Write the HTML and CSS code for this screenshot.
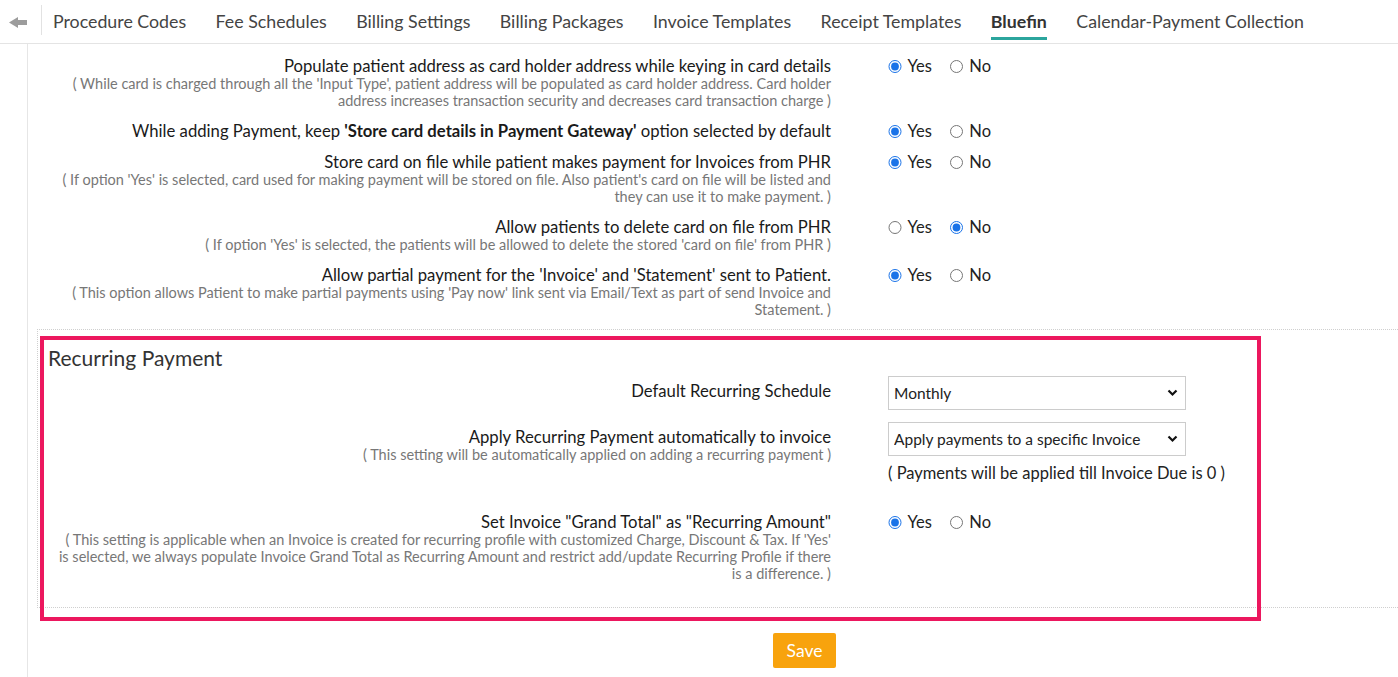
FILE: index.html
```html
<!DOCTYPE html>
<html lang="en">
<head>
<meta charset="utf-8">
<title>Bluefin Settings</title>
<link rel="stylesheet" href="styles.css">
</head>
<body>
<header class="topbar">
  <button class="back" type="button" aria-label="Back">
    <svg width="18" height="11" viewBox="0 0 18 11"><polygon points="0,5.5 9,0 9,11" fill="#9c9c9c"/><rect x="8" y="3" width="10" height="5" fill="#9c9c9c"/></svg>
  </button>
  <span class="divider"></span>
  <nav class="tabs">
    <a class="tab" href="#">Procedure Codes</a>
    <a class="tab" href="#">Fee Schedules</a>
    <a class="tab" href="#">Billing Settings</a>
    <a class="tab" href="#">Billing Packages</a>
    <a class="tab" href="#">Invoice Templates</a>
    <a class="tab" href="#">Receipt Templates</a>
    <a class="tab active" href="#">Bluefin</a>
    <a class="tab" href="#">Calendar-Payment Collection</a>
  </nav>
</header>

<main class="main">
  <div class="settings">
    <div class="row">
      <div class="label">
        <div class="title">Populate patient address as card holder address while keying in card details</div>
        <div class="desc">( While card is charged through all the 'Input Type', patient address will be populated as card holder address. Card holder address increases transaction security and decreases card transaction charge )</div>
      </div>
      <div class="options">
        <label class="opt"><input type="radio" name="r1" checked>Yes</label>
        <label class="opt"><input type="radio" name="r1">No</label>
      </div>
    </div>
    <div class="row">
      <div class="label">
        <div class="title">While adding Payment, keep <b>'Store card details in Payment Gateway'</b> option selected by default</div>
      </div>
      <div class="options">
        <label class="opt"><input type="radio" name="r2" checked>Yes</label>
        <label class="opt"><input type="radio" name="r2">No</label>
      </div>
    </div>
    <div class="row">
      <div class="label">
        <div class="title">Store card on file while patient makes payment for Invoices from PHR</div>
        <div class="desc">( If option 'Yes' is selected, card used for making payment will be stored on file. Also patient's card on file will be listed and they can use it to make payment. )</div>
      </div>
      <div class="options">
        <label class="opt"><input type="radio" name="r3" checked>Yes</label>
        <label class="opt"><input type="radio" name="r3">No</label>
      </div>
    </div>
    <div class="row">
      <div class="label">
        <div class="title">Allow patients to delete card on file from PHR</div>
        <div class="desc">( If option 'Yes' is selected, the patients will be allowed to delete the stored 'card on file' from PHR )</div>
      </div>
      <div class="options">
        <label class="opt"><input type="radio" name="r4">Yes</label>
        <label class="opt"><input type="radio" name="r4" checked>No</label>
      </div>
    </div>
    <div class="row">
      <div class="label">
        <div class="title">Allow partial payment for the 'Invoice' and 'Statement' sent to Patient.</div>
        <div class="desc">( This option allows Patient to make partial payments using 'Pay now' link sent via Email/Text as part of send Invoice and Statement. )</div>
      </div>
      <div class="options">
        <label class="opt"><input type="radio" name="r5" checked>Yes</label>
        <label class="opt"><input type="radio" name="r5">No</label>
      </div>
    </div>
  </div>

  <section class="recurring">
    <h3 class="section-title">Recurring Payment</h3>
    <div class="row row-schedule">
      <div class="label pad">
        <div class="title">Default Recurring Schedule</div>
      </div>
      <div class="control">
        <div class="select">
          <select><option>Monthly</option></select>
          <svg width="11" height="8" viewBox="0 0 11 8"><polyline points="1.5,1.5 5.5,5.5 9.5,1.5" fill="none" stroke="#111" stroke-width="2.2"/></svg>
        </div>
      </div>
    </div>
    <div class="row row-apply">
      <div class="label pad">
        <div class="title">Apply Recurring Payment automatically to invoice</div>
        <div class="desc">( This setting will be automatically applied on adding a recurring payment )</div>
      </div>
      <div class="control">
        <div class="select">
          <select><option>Apply payments to a specific Invoice</option></select>
          <svg width="11" height="8" viewBox="0 0 11 8"><polyline points="1.5,1.5 5.5,5.5 9.5,1.5" fill="none" stroke="#111" stroke-width="2.2"/></svg>
        </div>
        <div class="help">( Payments will be applied till Invoice Due is 0 )</div>
      </div>
    </div>
    <div class="row">
      <div class="label">
        <div class="title">Set Invoice "Grand Total" as "Recurring Amount"</div>
        <div class="desc">( This setting is applicable when an Invoice is created for recurring profile with customized Charge, Discount &amp; Tax. If 'Yes' is selected, we always populate Invoice Grand Total as Recurring Amount and restrict add/update Recurring Profile if there is a difference. )</div>
      </div>
      <div class="options">
        <label class="opt"><input type="radio" name="r6" checked>Yes</label>
        <label class="opt"><input type="radio" name="r6">No</label>
      </div>
    </div>
  </section>

  <div class="actions">
    <button class="save" type="button">Save</button>
  </div>
</main>

<div class="highlight"></div>
</body>
</html>
```
FILE: styles.css
```css
* { box-sizing: border-box; }
html, body { margin: 0; padding: 0; }
body {
  font-family: Lato, "Open Sans", "Liberation Sans", sans-serif;
  font-size: 16px;
  color: #222;
  background: #fff;
  width: 1398px;
  height: 677px;
  overflow: hidden;
  position: relative;
}

/* top tab bar */
.topbar {
  display: flex;
  align-items: flex-start;
  height: 44px;
  border-bottom: 1px solid #e4e4e4;
}
.back {
  width: 41px;
  height: 43px;
  border: 0;
  background: none;
  padding: 1px 0 0 9px;
  display: flex;
  align-items: center;
  justify-content: flex-start;
}
.divider {
  width: 1px;
  height: 30px;
  margin-top: 5px;
  background: #e2e2e2;
}
.tabs {
  display: flex;
  gap: 29.4px;
  margin-left: 11px;
}
.tab {
  display: block;
  font-size: 17.8px;
  line-height: 20px;
  padding-top: 11px;
  padding-bottom: 6px;
  border-bottom: 3px solid transparent;
  color: #444;
  text-decoration: none;
  white-space: nowrap;
}
.tab.active {
  font-weight: 700;
  color: #333;
  border-bottom-color: #2ba59d;
}

/* main area */
.main {
  margin-left: 27px;
  border-left: 1px solid #e6e6e6;
  height: 633px;
}
.settings {
  display: flex;
  flex-direction: column;
  gap: 14px;
  padding: 14px 0 11px 30px;
}
.row {
  display: grid;
  grid-template-columns: 773px auto;
  column-gap: 57px;
  align-items: start;
}
.label { text-align: right; }
.label.pad { padding-top: 7px; }
.title {
  font-size: 16.7px;
  line-height: 17px;
  color: #1a1a1a;
}
.title b { font-weight: 700; }
.desc {
  font-size: 14.5px;
  line-height: 17px;
  color: #777;
}
.options {
  display: flex;
  align-items: center;
  gap: 18px;
  height: 17px;
  font-size: 16.5px;
  color: #222;
}
.opt {
  display: inline-flex;
  align-items: center;
  gap: 6px;
  line-height: 17px;
}
.opt input {
  margin: 0;
  width: 13.5px;
  height: 13.5px;
  accent-color: #1a73e8;
}

/* recurring section */
.recurring {
  margin-left: 9px;
  border-top: 1px dotted #cfcfcf;
  border-left: 1px dotted #cfcfcf;
  border-bottom: 1px dotted #cfcfcf;
  padding: 16px 0 25px 10px;
}
.recurring .row { margin-left: 10px; }
.section-title {
  margin: 0 0 6px;
  font-size: 21px;
  line-height: 24px;
  font-weight: 400;
  color: #333;
}
.row-schedule { margin-bottom: 12px; }
.row-apply { margin-bottom: 32px; }
.select {
  display: grid;
  width: 298px;
}
.select select,
.select svg { grid-area: 1 / 1; }
.select select {
  appearance: none;
  -webkit-appearance: none;
  height: 34px;
  border: 1px solid #cccccc;
  border-radius: 0;
  background: #fff;
  padding: 0 30px 0 5px;
  font-family: Lato, "Open Sans", sans-serif;
  font-size: 15.5px;
  color: #222;
}
.select svg {
  justify-self: end;
  align-self: center;
  margin-right: 8px;
  pointer-events: none;
}
.help {
  margin-top: 9px;
  font-size: 16.5px;
  line-height: 17px;
  color: #222;
}

/* actions */
.actions { padding: 25px 0 0 745px; }
.save {
  width: 63px;
  height: 35px;
  border: 0;
  border-radius: 2px;
  background: #f8a30d;
  color: #fff;
  font-family: Lato, "Open Sans", sans-serif;
  font-size: 17.5px;
}

/* annotation highlight */
.highlight {
  position: absolute;
  left: 40px;
  top: 336px;
  width: 1221px;
  height: 285px;
  border: 4px solid #ec175e;
  pointer-events: none;
}
```
